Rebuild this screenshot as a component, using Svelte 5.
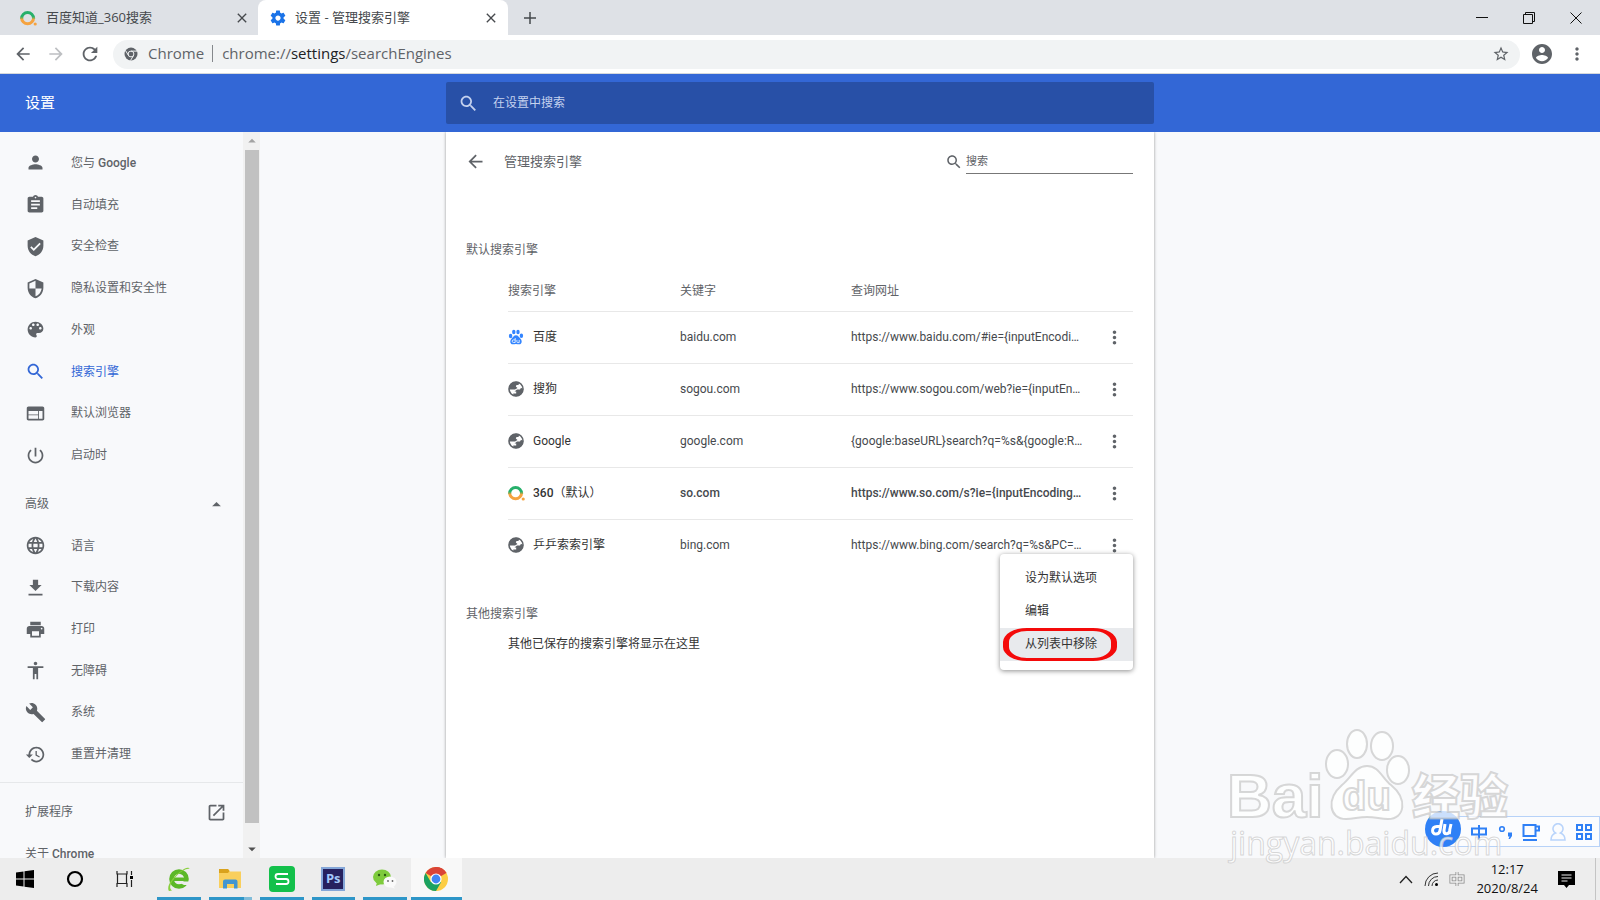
<script lang="ts">
  type NavItem = { icon: string; label: string; latin?: string; active?: boolean }
  type Engine = { icon: 'baidu' | 'globe' | 'so'; name: string; suffix?: string; keyword: string; url: string; isDefault?: boolean }

  const paths: Record<string, string> = {
    person: 'M12 12c2.21 0 4-1.79 4-4s-1.79-4-4-4-4 1.79-4 4 1.79 4 4 4zm0 2c-2.67 0-8 1.34-8 4v2h16v-2c0-2.66-5.33-4-8-4z',
    assignment: 'M19 3h-4.18C14.4 1.84 13.3 1 12 1c-1.3 0-2.4.84-2.82 2H5c-1.1 0-2 .9-2 2v14c0 1.1.9 2 2 2h14c1.1 0 2-.9 2-2V5c0-1.1-.9-2-2-2zm-7 0c.55 0 1 .45 1 1s-.45 1-1 1-1-.45-1-1 .45-1 1-1zm2 14H7v-2h7v2zm3-4H7v-2h10v2zm0-4H7V7h10v2z',
    verified: 'M12 1L3 5v6c0 5.55 3.84 10.74 9 12 5.16-1.26 9-6.45 9-12V5l-9-4zm-2 16l-4-4 1.41-1.41L10 14.17l6.59-6.59L18 9l-8 8z',
    security: 'M12 1L3 5v6c0 5.55 3.84 10.74 9 12 5.16-1.26 9-6.45 9-12V5l-9-4zm0 10.99h7c-.53 4.12-3.28 7.79-7 8.94V12H5V6.3l7-3.11v8.8z',
    palette: 'M12 3c-4.97 0-9 4.03-9 9s4.03 9 9 9c.83 0 1.5-.67 1.5-1.5 0-.39-.15-.74-.39-1.01-.23-.26-.38-.61-.38-.99 0-.83.67-1.5 1.5-1.5H16c2.76 0 5-2.24 5-5 0-4.42-4.03-8-9-8zm-5.5 9c-.83 0-1.5-.67-1.5-1.5S5.67 9 6.5 9 8 9.67 8 10.5 7.33 12 6.5 12zm3-4C8.67 8 8 7.33 8 6.5S8.67 5 9.5 5s1.5.67 1.5 1.5S10.33 8 9.5 8zm5 0c-.83 0-1.5-.67-1.5-1.5S13.67 5 14.5 5s1.5.67 1.5 1.5S15.33 8 14.5 8zm3 4c-.83 0-1.5-.67-1.5-1.5S16.67 9 17.5 9s1.5.67 1.5 1.5-.67 1.5-1.5 1.5z',
    search: 'M15.5 14h-.79l-.28-.27C15.41 12.59 16 11.11 16 9.5 16 5.91 13.09 3 9.5 3S3 5.91 3 9.5 5.91 16 9.5 16c1.61 0 3.09-.59 4.23-1.57l.27.28v.79l5 4.99L20.49 19l-4.99-5zm-6 0C7.01 14 5 11.99 5 9.5S7.01 5 9.5 5 14 7.01 14 9.5 11.99 14 9.5 14z',
    web: 'M20 4H4c-1.1 0-1.99.9-1.99 2L2 18c0 1.1.9 2 2 2h16c1.1 0 2-.9 2-2V6c0-1.1-.9-2-2-2zm-5 14H4v-4h11v4zm0-5H4V9h11v4zm5 5h-4V9h4v9z',
    power: 'M13 3h-2v10h2V3zm4.83 2.17l-1.42 1.42C17.99 7.86 19 9.81 19 12c0 3.87-3.13 7-7 7s-7-3.13-7-7c0-2.19 1.01-4.14 2.58-5.42L6.17 5.17C4.23 6.82 3 9.26 3 12c0 4.97 4.03 9 9 9s9-4.03 9-9c0-2.74-1.23-5.18-3.17-6.83z',
    language: 'M11.99 2C6.47 2 2 6.48 2 12s4.47 10 9.99 10C17.52 22 22 17.52 22 12S17.52 2 11.99 2zm6.93 6h-2.95c-.32-1.25-.78-2.45-1.38-3.56 1.84.63 3.37 1.91 4.33 3.56zM12 4.04c.83 1.2 1.48 2.53 1.91 3.96h-3.82c.43-1.43 1.08-2.76 1.91-3.96zM4.26 14C4.1 13.36 4 12.69 4 12s.1-1.36.26-2h3.38c-.08.66-.14 1.32-.14 2 0 .68.06 1.34.14 2H4.26zm.82 2h2.95c.32 1.25.78 2.45 1.38 3.56-1.84-.63-3.37-1.9-4.33-3.56zm2.95-8H5.08c.96-1.66 2.49-2.93 4.33-3.56C8.81 5.55 8.35 6.75 8.03 8zM12 19.96c-.83-1.2-1.48-2.53-1.91-3.96h3.82c-.43 1.43-1.08 2.76-1.91 3.96zM14.34 14H9.66c-.09-.66-.16-1.32-.16-2 0-.68.07-1.35.16-2h4.68c.09.65.16 1.32.16 2 0 .68-.07 1.34-.16 2zm.25 5.56c.6-1.11 1.06-2.31 1.38-3.56h2.95c-.96 1.65-2.49 2.93-4.33 3.56zM16.36 14c.08-.66.14-1.32.14-2 0-.68-.06-1.34-.14-2h3.38c.16.64.26 1.31.26 2s-.1 1.36-.26 2h-3.38z',
    download: 'M19 9h-4V3H9v6H5l7 7 7-7zM4 19v2h16v-2H4z',
    print: 'M19 8H5c-1.66 0-3 1.34-3 3v6h4v4h12v-4h4v-6c0-1.66-1.34-3-3-3zm-3 11H8v-5h8v5zm3-7c-.55 0-1-.45-1-1s.45-1 1-1 1 .45 1 1-.45 1-1 1zm-1-9H6v4h12V3z',
    accessibility: 'M12 2c1.1 0 2 .9 2 2s-.9 2-2 2-2-.9-2-2 .9-2 2-2zm9 7h-6v13h-2v-6h-2v6H9V9H3V7h18v2z',
    build: 'M22.7 19l-9.1-9.1c.9-2.3.4-5-1.5-6.9-2-2-5-2.4-7.4-1.3L9 6 6 9 1.6 4.7C.4 7.1.9 10.1 2.9 12.1c1.9 1.9 4.6 2.4 6.9 1.5l9.1 9.1c.4.4 1 .4 1.4 0l2.3-2.3c.5-.4.5-1.1.1-1.4z',
    restore: 'M13 3c-4.97 0-9 4.03-9 9H1l3.89 3.89.07.14L9 12H6c0-3.87 3.13-7 7-7s7 3.13 7 7-3.13 7-7 7c-1.93 0-3.68-.79-4.94-2.06l-1.42 1.42C8.27 19.99 10.51 21 13 21c4.97 0 9-4.03 9-9s-4.03-9-9-9zm-1 5v5l4.28 2.54.72-1.21-3.5-2.08V8H12z',
    open: 'M19 19H5V5h7V3H5c-1.11 0-2 .9-2 2v14c0 1.1.89 2 2 2h14c1.1 0 2-.9 2-2v-7h-2v7zM14 3v2h3.59l-9.83 9.83 1.41 1.41L19 6.41V10h2V3h-7z',
    back: 'M20 11H7.83l5.59-5.59L12 4l-8 8 8 8 1.41-1.41L7.83 13H20v-2z',
    forward: 'M12 4l-1.41 1.41L16.17 11H4v2h12.17l-5.58 5.59L12 20l8-8z',
    reload: 'M17.65 6.35C16.2 4.9 14.21 4 12 4c-4.42 0-7.99 3.58-7.99 8s3.57 8 7.99 8c3.73 0 6.84-2.55 7.73-6h-2.08c-.82 2.33-3.04 4-5.65 4-3.31 0-6-2.69-6-6s2.69-6 6-6c1.66 0 3.14.69 4.22 1.78L13 11h7V4l-2.35 2.35z',
    account: 'M12 2C6.48 2 2 6.48 2 12s4.48 10 10 10 10-4.48 10-10S17.52 2 12 2zm0 3c1.66 0 3 1.34 3 3s-1.34 3-3 3-3-1.34-3-3 1.34-3 3-3zm0 14.2c-2.5 0-4.71-1.28-6-3.22.03-1.99 4-3.08 6-3.08 1.99 0 5.97 1.09 6 3.08-1.29 1.94-3.5 3.22-6 3.22z',
    star: 'M22 9.24l-7.19-.62L12 2 9.19 8.63 2 9.24l5.46 4.73L5.82 21 12 17.27 18.18 21l-1.63-7.03L22 9.24zM12 15.4l-3.76 2.27 1-4.28-3.32-2.88 4.38-.38L12 6.1l1.71 4.04 4.38.38-3.32 2.88 1 4.28L12 15.4z',
    more: 'M12 8c1.1 0 2-.9 2-2s-.9-2-2-2-2 .9-2 2 .9 2 2 2zm0 2c-1.1 0-2 .9-2 2s.9 2 2 2 2-.9 2-2-.9-2-2-2zm0 6c-1.1 0-2 .9-2 2s.9 2 2 2 2-.9 2-2-.9-2-2-2z',
    gear: 'M19.43 12.98c.04-.32.07-.64.07-.98s-.03-.66-.07-.98l2.11-1.65c.19-.15.24-.42.12-.64l-2-3.46c-.12-.22-.39-.3-.61-.22l-2.49 1c-.52-.4-1.08-.73-1.69-.98l-.38-2.65C14.46 2.18 14.25 2 14 2h-4c-.25 0-.46.18-.49.42l-.38 2.65c-.61.25-1.17.59-1.69.98l-2.49-1c-.23-.09-.49 0-.61.22l-2 3.46c-.13.22-.07.49.12.64l2.11 1.65c-.04.32-.07.65-.07.98s.03.66.07.98l-2.11 1.65c-.19.15-.24.42-.12.64l2 3.46c.12.22.39.3.61.22l2.49-1c.52.4 1.08.73 1.69.98l.38 2.65c.03.24.24.42.49.42h4c.25 0 .46-.18.49-.42l.38-2.65c.61-.25 1.17-.59 1.69-.98l2.49 1c.23.09.49 0 .61-.22l2-3.46c.12-.22.07-.49-.12-.64l-2.11-1.65zM12 15.5c-1.93 0-3.5-1.57-3.5-3.5s1.57-3.5 3.5-3.5 3.5 1.57 3.5 3.5-1.57 3.5-3.5 3.5z',
    close: 'M19 6.41L17.59 5 12 10.59 6.41 5 5 6.41 10.59 12 5 17.59 6.41 19 12 13.41 17.59 19 19 17.59 13.41 12z',
    add: 'M20 13h-7v7h-2v-7H4v-2h7V4h2v7h7z',
    up: 'M7 14l5-5 5 5z',
    down: 'M7 10l5 5 5-5z',
  }

  const basic: NavItem[] = [
    { icon: 'person', label: '您与', latin: 'Google' },
    { icon: 'assignment', label: '自动填充' },
    { icon: 'verified', label: '安全检查' },
    { icon: 'security', label: '隐私设置和安全性' },
    { icon: 'palette', label: '外观' },
    { icon: 'search', label: '搜索引擎', active: true },
    { icon: 'web', label: '默认浏览器' },
    { icon: 'power', label: '启动时' },
  ]

  const advanced: NavItem[] = [
    { icon: 'language', label: '语言' },
    { icon: 'download', label: '下载内容' },
    { icon: 'print', label: '打印' },
    { icon: 'accessibility', label: '无障碍' },
    { icon: 'build', label: '系统' },
    { icon: 'restore', label: '重置并清理' },
  ]

  const engines: Engine[] = [
    { icon: 'baidu', name: '百度', keyword: 'baidu.com', url: 'https://www.baidu.com/#ie={inputEncodi…' },
    { icon: 'globe', name: '搜狗', keyword: 'sogou.com', url: 'https://www.sogou.com/web?ie={inputEn…' },
    { icon: 'globe', name: 'Google', keyword: 'google.com', url: '{google:baseURL}search?q=%s&{google:R…' },
    { icon: 'so', name: '360', suffix: '（默认）', keyword: 'so.com', url: 'https://www.so.com/s?ie={inputEncoding…', isDefault: true },
    { icon: 'globe', name: '乒乒索索引擎', keyword: 'bing.com', url: 'https://www.bing.com/search?q=%s&PC=…' },
  ]

  let openMenu = $state(4)
  let showAdvanced = $state(true)
</script>

{#snippet icon(name: string, size: number)}
  <svg width={size} height={size} viewBox="0 0 24 24" fill="currentColor" aria-hidden="true"><path d={paths[name]} /></svg>
{/snippet}

{#snippet soLogo()}
  <svg width="17" height="18" viewBox="0 0 17 18" fill="none" stroke-width="3" aria-hidden="true">
    <path d="M1.6 9.5a6 6 0 0 1 12 0" stroke="#27b06b" />
    <path d="M1.6 8.8a6 6 0 0 0 12 0" stroke="#f5a340" />
    <path d="M1.6 8.8v.9M13.6 8.8v.9" stroke="#8dae55" />
    <circle cx="15.2" cy="15" r="1.6" fill="#f5a340" />
  </svg>
{/snippet}

{#snippet globe()}
  <svg width="16" height="16" viewBox="0 0 16 16" aria-hidden="true">
    <circle cx="8" cy="8" r="7" fill="#fff" stroke="#5f6368" stroke-width="1.6" />
    <path d="M1 8c0-4 3-7.2 7-7.2 1.5 0 2.6.3 3.2.8L10.5 4H8.5L7.8 5.6 9.5 7 7 8.6H1z" fill="#5f6368" />
    <path d="M15.2 8c0 3.8-3 7.2-7.2 7.2-1 0-2-.2-2.6-.5L5.200 12.500H8.200V10.500H6.500L9 8.600H12L13 6.800z" fill="#5f6368" />
  </svg>
{/snippet}

{#snippet baiduLogo()}
  <svg width="16" height="16" viewBox="0 0 16 16" fill="#3385ff" aria-hidden="true">
    <ellipse cx="2.6" cy="7" rx="1.7" ry="2.2" />
    <ellipse cx="5.8" cy="3" rx="1.7" ry="2.2" />
    <ellipse cx="10" cy="3" rx="1.7" ry="2.2" />
    <ellipse cx="13.4" cy="6.8" rx="1.7" ry="2.2" />
    <path d="M8 6.3c2.200 0 3 2 4.500 3.400 2 2 1.500 5.600-1.300 5.600-1.200 0-2-.4-3.200-.4s-2 .4-3.200.4c-2.800 0-3.300-3.600-1.300-5.600C5 8.300 5.800 6.300 8 6.300z" />
    <path d="M7.2 9v4.500H5.500a1.300 1.300 0 0 1 0-2.600h1.700M8.900 10.900v2a.8.8 0 0 0 .8.700h1.500v-2.700" fill="none" stroke="#fff" stroke-width=".8" />
  </svg>
{/snippet}

{#snippet navLink(item: NavItem)}
  <a class="nav-item" class:active={item.active} href="#{item.icon}">
    {@render icon(item.icon, 21)}
    <span>{item.label}{#if item.latin}{' '}<b>{item.latin}</b>{/if}</span>
  </a>
{/snippet}

<div class="screen">
  <header class="tabs">
    <div class="tab">
      {@render soLogo()}
      <span class="tab-title">百度知道_360搜索</span>
      <button aria-label="关闭标签页">{@render icon('close', 16)}</button>
    </div>
    <div class="tab current">
      <span class="gear">{@render icon('gear', 18)}</span>
      <span class="tab-title">设置 - 管理搜索引擎</span>
      <button aria-label="关闭标签页">{@render icon('close', 16)}</button>
    </div>
    <button class="new-tab" aria-label="新标签页">{@render icon('add', 18)}</button>
    <div class="window-buttons">
      <button aria-label="最小化"><svg width="12" height="12" viewBox="0 0 12 12"><path d="M0 5.5h12" stroke="#111" /></svg></button>
      <button aria-label="还原"><svg width="12" height="12" viewBox="0 0 12 12" fill="none" stroke="#111"><path d="M.5 2.500h9v9h-9zM2.500 2.500v-2h9v9h-2" /></svg></button>
      <button aria-label="关闭"><svg width="12" height="12" viewBox="0 0 12 12"><path d="M.5.500l11 11M11.500.500l-11 11" stroke="#111" /></svg></button>
    </div>
  </header>

  <div class="toolbar">
    <button aria-label="后退">{@render icon('back', 20)}</button>
    <button class="off" aria-label="前进" disabled>{@render icon('forward', 20)}</button>
    <button aria-label="重新加载">{@render icon('reload', 22)}</button>
    <div class="omnibox">
      <svg width="14" height="14" viewBox="0 0 14 14" aria-hidden="true">
        <circle cx="7" cy="7" r="6.5" fill="#5f6368" />
        <circle cx="7" cy="7" r="2.9" fill="none" stroke="#f1f3f4" stroke-width="1" />
        <path d="M7 4.100h6M4.500 8.500l-3-5M9.500 8.500l-3 5" stroke="#f1f3f4" stroke-width="1" />
      </svg>
      <span class="origin">Chrome</span>
      <span class="address">chrome://<em>settings</em>/searchEngines</span>
      <button aria-label="收藏">{@render icon('star', 18)}</button>
    </div>
    <button aria-label="用户">{@render icon('account', 24)}</button>
    <button aria-label="菜单">{@render icon('more', 20)}</button>
  </div>

  <div class="settings-bar">
    <h1>设置</h1>
    <label class="settings-search">
      {@render icon('search', 21)}
      <input type="text" placeholder="在设置中搜索" />
    </label>
  </div>

  <div class="body">
    <div class="side">
      <nav>
        <div class="group basic">
          {#each basic as item}{@render navLink(item)}{/each}
        </div>
        <button class="wide" onclick={() => (showAdvanced = !showAdvanced)}>
          <span>高级</span>{@render icon(showAdvanced ? 'up' : 'down', 21)}
        </button>
        {#if showAdvanced}
          <div class="group advanced">
            {#each advanced as item}{@render navLink(item)}{/each}
          </div>
        {/if}
        <hr />
        <a class="wide" href="#extensions"><span>扩展程序</span>{@render icon('open', 21)}</a>
        <a class="wide" href="#about"><span>关于 <b>Chrome</b></span></a>
      </nav>
      <div class="scrollbar">
        <span class="up">{@render icon('up', 18)}</span>
        <div class="thumb"></div>
        <span>{@render icon('down', 18)}</span>
      </div>
    </div>

    <main>
      <div class="page-head">
        <button aria-label="返回">{@render icon('back', 21)}</button>
        <h2>管理搜索引擎</h2>
        <label class="page-search">
          {@render icon('search', 18)}
          <input type="text" placeholder="搜索" />
        </label>
      </div>

      <h3>默认搜索引擎</h3>
      <table>
        <thead>
          <tr><th class="name">搜索引擎</th><th class="keyword">关键字</th><th>查询网址</th><th class="actions"></th></tr>
        </thead>
        <tbody>
          {#each engines as e, i}
            <tr class:default={e.isDefault}>
              <td class="name">
                <div class="engine">
                  {#if e.icon === 'baidu'}{@render baiduLogo()}{:else if e.icon === 'so'}{@render soLogo()}{:else}{@render globe()}{/if}
                  <span>{e.name}{#if e.suffix}<small>{e.suffix}</small>{/if}</span>
                </div>
              </td>
              <td>{e.keyword}</td>
              <td>{e.url}</td>
              <td class="actions">
                <button aria-label="更多操作" onclick={() => (openMenu = openMenu === i ? -1 : i)}>{@render icon('more', 21)}</button>
                {#if openMenu === i}
                  <div class="menu">
                    <button>设为默认选项</button>
                    <button>编辑</button>
                    <button class="hover">从列表中移除<span class="mark"></span></button>
                  </div>
                {/if}
              </td>
            </tr>
          {/each}
        </tbody>
      </table>

      <h3 class="other">其他搜索引擎</h3>
      <p>其他已保存的搜索引擎将显示在这里</p>
    </main>
  </div>

  <footer>
    <div class="system">
      <button aria-label="开始">
        <svg width="18" height="18" viewBox="0 0 18 18"><path d="M0 2.500L7.500 1.500V8.500H0zM8.500 1.300L18 0V8.500H8.500zM0 9.500H7.500V16.500L0 15.500zM8.500 9.500H18V18L8.500 16.700z" fill="#000" /></svg>
      </button>
      <button aria-label="搜索">
        <svg width="18" height="18" viewBox="0 0 18 18"><circle cx="9" cy="9" r="7" fill="none" stroke="#000" stroke-width="2.2" /></svg>
      </button>
      <button aria-label="任务视图">
        <svg width="18" height="18" viewBox="0 0 18 18" fill="none" stroke="#222" stroke-width="1.2"><path d="M1 1v3h10V1M1.500 4v9M10.500 4v9M1 17v-3.500h10V17M15.500 1v4M15.500 10v7" /><path d="M14 6h3v3h-3z" fill="#000" stroke="none" /></svg>
      </button>
    </div>
    <div class="apps">
      <button class="app" aria-label="360浏览器">
        <svg width="24" height="26" viewBox="0 0 24 26">
          <circle cx="12" cy="13" r="7.5" fill="none" stroke="#5cb829" stroke-width="4.6" />
          <path d="M10 15.500h14v3.500h-7z" fill="#ededed" />
          <path d="M7 11.500h14v3.500H7z" fill="#5cb829" />
          <path d="M2 25c-3-4 3-13 10-18.500C17 2.400 22 0 22.500 3 20 2 14 5 9 10.500 4 16 1 22 5 24.500z" fill="#88cf3c" />
        </svg>
      </button>
      <button class="app grouped" aria-label="文件资源管理器">
        <svg width="24" height="20" viewBox="0 0 24 20">
          <path d="M1 0h9l2 2.500h11V19H1z" fill="#f9cf5d" />
          <path d="M1 0h9l1.500 2-1.500 2H1z" fill="#d9a21d" />
          <path d="M5 19.500v-7a2 2 0 0 1 2-2h10.500a2 2 0 0 1 2 2v7H16V15H9v4.500z" fill="#4296d2" />
        </svg>
      </button>
      <button class="app" aria-label="WPS">
        <svg width="26" height="26" viewBox="0 0 26 26">
          <rect width="26" height="26" rx="4" fill="#13c04b" />
          <path d="M19 8H9a2.500 2.500 0 0 0 0 5h8a2.500 2.500 0 0 1 0 5H7" fill="none" stroke="#fff" stroke-width="1.8" />
        </svg>
      </button>
      <button class="app" aria-label="Photoshop"><span class="ps">Ps</span></button>
      <button class="app" aria-label="微信">
        <svg width="24" height="20" viewBox="0 0 24 20">
          <ellipse cx="9" cy="8" rx="9" ry="7.6" fill="#7ecb3c" />
          <path d="M4 13l-1 4 5-2z" fill="#7ecb3c" />
          <circle cx="6" cy="6" r="1.2" fill="#2c5a12" /><circle cx="12" cy="6" r="1.2" fill="#2c5a12" />
          <ellipse cx="17" cy="13" rx="6.5" ry="5.6" fill="#fafafa" />
          <path d="M20 17l2 2.500-4-1z" fill="#fafafa" />
          <circle cx="15" cy="12" r=".9" fill="#666" /><circle cx="19.5" cy="12" r=".9" fill="#666" />
        </svg>
      </button>
      <button class="app front" aria-label="Chrome">
        <svg width="24" height="24" viewBox="0 0 24 24">
          <circle cx="12" cy="12" r="12" fill="#fccd44" />
          <path d="M12 12L1.600 6A12 12 0 0 1 22.400 6z" fill="#da4437" />
          <path d="M12 6h10.400A12 12 0 0 0 12 0z" fill="#da4437" />
          <path d="M1.600 6A12 12 0 0 0 12 24l5.200-9H6.800z" fill="#1ba261" />
          <circle cx="12" cy="12" r="5.6" fill="#fff" />
          <circle cx="12" cy="12" r="4.4" fill="#4285f4" />
        </svg>
      </button>
    </div>
    <div class="tray">
      <svg width="14" height="9" viewBox="0 0 14 9" fill="none" stroke="#222" stroke-width="1.3"><path d="M1 8l6-6.500L13 8" /></svg>
      <svg width="14" height="14" viewBox="0 0 14 14" fill="none" stroke="#333"><path d="M1 14A13 13 0 0 1 14 1M4.500 14A9.500 9.500 0 0 1 14 4.500M8 14a6 6 0 0 1 6-6" /><circle cx="12.5" cy="12.5" r="1.5" fill="#000" stroke="none" /></svg>
      <svg width="16" height="16" viewBox="0 0 16 16" fill="none"><path d="M2 5h12v6H2zM8 1v14" stroke="#888" stroke-width="3" /><path d="M2 5h12v6H2zM8 1v14" stroke="#f4f4f4" stroke-width="1.4" /></svg>
      <time><span>12:17</span><span>2020/8/24</span></time>
      <button aria-label="通知">
        <svg width="17" height="17" viewBox="0 0 17 17"><path d="M0 0h17v14h-6l-2.500 3L6 14H0z" fill="#000" /><path d="M3.500 4h10M3.500 7h10M3.500 10h6" stroke="#ededed" /></svg>
      </button>
      <span class="peek"></span>
    </div>
  </footer>

  <div class="ime">
    <svg width="36" height="36" viewBox="0 0 36 36"><circle cx="18" cy="18" r="18" fill="#2f80f6" /><g fill="none" stroke="#fff" stroke-width="3"><path d="M17 8l-2 11.500c-.3 2-2 3.500-4 3.500-4.500 0-5-7 1-7.500h3.500M20 13l-1 6.500c-.3 4 4.500 4.500 5.500.5l1.500-7M24.800 19l-.5 4" /></g></svg>
    <svg width="16" height="16" viewBox="0 0 16 16" fill="none" stroke="#2f80f6" stroke-width="2"><path d="M1 4.500h14v6H1zM8 1v15" /></svg>
    <svg width="16" height="16" viewBox="0 0 16 16"><circle cx="5" cy="5" r="2.3" fill="none" stroke="#2f80f6" stroke-width="1.6" /><path d="M11 8.500h4v3.500l-2 3h-1.500l1-2.500H11z" fill="#2f80f6" /></svg>
    <svg width="18" height="18" viewBox="0 0 18 18" fill="none" stroke="#2f80f6" stroke-width="2"><path d="M1.500 2h12v11h-12zM13.500 3.500H17v4h-3.500M1 17h14" /></svg>
    <svg width="16" height="18" viewBox="0 0 16 18" fill="none" stroke="#b9d4fb" stroke-width="1.6"><path d="M5.500 10a5 5 0 1 1 5 0C13 11 15 13 15 17H1c0-4 2-6 4.500-7z" /></svg>
    <svg width="16" height="16" viewBox="0 0 16 16" fill="none" stroke="#2f80f6" stroke-width="2"><path d="M1 1h5v5H1zM10 1h5v5h-5zM1 10h5v5H1zM10 10h5v5h-5z" /></svg>
  </div>

  <svg class="watermark" width="300" height="150" viewBox="0 0 300 150">
    <ellipse cx="111" cy="47" rx="11" ry="14" />
    <ellipse cx="131" cy="27" rx="10" ry="14" />
    <ellipse cx="156" cy="29" rx="11" ry="14" />
    <ellipse cx="172" cy="53" rx="11" ry="14" />
    <path d="M141 49c12 0 15 12 24 19 17 14 14 34-3 34-8 0-12-2-21-2s-13 2-21 2c-17 0-20-20-4-34 9-7 13-19 25-19z" />
    <text class="latin" x="1" y="100" font-size="62">Bai</text>
    <text class="latin" x="116" y="93" font-size="40">du</text>
    <text class="cjk" x="186" y="97" font-size="48">经验</text>
    <text class="link" x="4" y="138" font-size="32">jingyan.baidu.com</text>
  </svg>
</div>

<style>
  :global(body) {
    overflow: hidden;
  }
  .screen {
    --grey: #5f6368;
    position: relative;
    display: flex;
    flex-direction: column;
    height: 100vh;
    font: 12px/18px Roboto, "Noto Sans CJK SC", sans-serif;
    color: #46494d;
    background: #f8f9fb;
  }
  .screen * {
    box-sizing: border-box;
  }
  svg {
    display: block;
    flex: none;
  }
  button {
    display: flex;
    align-items: center;
    justify-content: center;
    padding: 0;
    border: 0;
    background: none;
    color: inherit;
    font: inherit;
  }
  a {
    color: inherit;
    text-decoration: none;
  }
  b {
    font-weight: 500;
  }
  input {
    min-width: 0;
    flex: 1;
    padding: 0;
    border: 0;
    outline: 0;
    background: none;
    color: inherit;
    font: inherit;
  }
  input::placeholder {
    color: inherit;
    opacity: 1;
  }

  .tabs {
    display: flex;
    align-items: center;
    height: 35px;
    flex: none;
    background: #dee1e6;
    font: 13px/18px "Open Sans", "Noto Sans CJK SC", sans-serif;
  }
  .tab {
    display: flex;
    align-items: center;
    gap: 9px;
    width: 258px;
    height: 35px;
    padding: 0 8px 0 20px;
  }
  .tab.current {
    width: 250px;
    padding: 0 9px 0 11px;
    gap: 8px;
    border-radius: 8px 8px 0 0;
    background: #fff;
  }
  .tab-title {
    flex: 1;
    padding-bottom: 2px;
    white-space: nowrap;
  }
  .gear {
    color: #1a73e8;
  }
  .new-tab {
    width: 44px;
  }
  .window-buttons {
    display: flex;
    height: 30px;
    margin-left: auto;
    padding-right: 1px;
  }
  .window-buttons button {
    width: 47px;
  }

  .toolbar {
    display: flex;
    align-items: center;
    height: 39px;
    flex: none;
    padding: 0 13px;
    gap: 13px;
    background: #fff;
    border-bottom: 1px solid #d5d8dc;
    color: var(--grey);
  }
  .toolbar > .off {
    color: #bdbfc2;
  }
  .omnibox {
    display: flex;
    align-items: center;
    flex: 1;
    height: 29px;
    margin: 0 -3px 0 -1px;
    padding: 0 10px 0 11px;
    border-radius: 15px;
    background: #f1f3f4;
    font: 15px/20px "Open Sans", sans-serif;
  }
  .origin {
    margin: 0 0 2px 10px;
    padding-right: 8px;
    border-right: 1px solid #85888c;
    line-height: 17px;
  }
  .address {
    flex: 1;
    margin: 0 0 2px 9px;
  }
  .address em {
    font-style: normal;
    color: #202124;
  }

  .settings-bar {
    display: grid;
    grid-template-columns: 1fr minmax(0, 708px) 1fr;
    align-items: center;
    height: 58px;
    flex: none;
    background: #3367d6;
    color: #fff;
  }
  h1 {
    margin: 0;
    padding-left: 25px;
    font-size: 15px;
    font-weight: 400;
  }
  .settings-search {
    display: flex;
    align-items: center;
    gap: 14px;
    height: 42px;
    padding-left: 12px;
    border-radius: 2px;
    background: #2850a7;
    color: #c5d2ef;
  }

  .body {
    display: grid;
    grid-template-columns: 1fr minmax(0, 708px) 1fr;
    flex: 1;
    min-height: 0;
  }
  .side {
    display: flex;
    width: 260px;
    min-height: 0;
    color: var(--grey);
  }
  nav {
    flex: 1;
    overflow: hidden;
    padding-top: 10px;
  }
  .group {
    display: grid;
    grid-auto-rows: 1fr;
  }
  .basic {
    height: 334px;
    margin-bottom: 7px;
  }
  .advanced {
    height: 250px;
  }
  .nav-item {
    display: flex;
    align-items: center;
    gap: 25px;
    padding-left: 25px;
  }
  .nav-item.active {
    color: #3367d6;
  }
  .wide {
    display: flex;
    align-items: center;
    justify-content: space-between;
    width: 100%;
    height: 42px;
    padding: 0 16px 0 25px;
  }
  hr {
    margin: 7px 0 8px;
    border: 0;
    border-top: 1px solid #e6e8ea;
  }
  .scrollbar {
    display: flex;
    flex-direction: column;
    align-items: center;
    width: 17px;
    background: #f1f1f1;
    color: #505050;
  }
  .scrollbar .up {
    color: #a3a3a3;
  }
  .thumb {
    width: 14px;
    flex: 1;
    margin-bottom: 17px;
    background: #c1c1c1;
  }

  main {
    padding: 0 21px 0 20px;
    background: #fff;
    box-shadow: 0 0 3px rgba(0, 0, 0, 0.4);
    clip-path: inset(0 -4px);
  }
  .page-head {
    display: flex;
    align-items: center;
    height: 59px;
    color: var(--grey);
  }
  .page-head button {
    width: 18px;
  }
  h2 {
    flex: 1;
    margin: 0 0 0 20px;
    font-size: 13px;
    font-weight: 400;
  }
  .page-search {
    display: flex;
    align-items: center;
    gap: 3px;
    width: 188px;
    font-size: 11px;
  }
  .page-search input {
    height: 25px;
    border-bottom: 1px solid #777;
  }
  h3 {
    margin: 50px 0 11px;
    font-size: 12px;
    line-height: 18px;
    font-weight: 400;
    color: var(--grey);
  }
  table {
    width: calc(100% - 42px);
    margin-left: 42px;
    border-collapse: collapse;
    table-layout: fixed;
  }
  th {
    height: 41px;
    padding: 2px 0 0;
    text-align: left;
    font-weight: 400;
    color: var(--grey);
  }
  td {
    height: 52px;
    padding: 0;
    border-top: 1px solid #e8e8e8;
    white-space: nowrap;
  }
  .name {
    width: 172px;
  }
  .keyword {
    width: 171px;
  }
  .actions {
    position: relative;
    width: 40px;
  }
  .actions > button {
    width: 42px;
    height: 42px;
    color: var(--grey);
  }
  .engine {
    display: grid;
    grid-template-columns: 17px 1fr;
    align-items: center;
    justify-items: start;
    gap: 8px;
    color: #333;
  }
  .default td,
  .default .engine {
    font-weight: 500;
  }
  small {
    font-size: 12px;
    font-weight: 400;
  }
  .menu {
    position: absolute;
    z-index: 1;
    top: 34px;
    right: 0;
    width: 133px;
    padding: 8px 0 9px;
    border-radius: 4px;
    background: #fff;
    box-shadow: 0 1px 5px rgba(0, 0, 0, 0.45);
    color: #333;
  }
  .menu button {
    position: relative;
    justify-content: flex-start;
    width: 100%;
    height: 33px;
    padding-left: 25px;
  }
  .menu .hover {
    background: #e8eaed;
  }
  .mark {
    position: absolute;
    inset: 0 16px 0 3px;
    border: solid #f40a0a;
    border-width: 3px 6px;
    border-radius: 24px / 14px;
  }
  .other {
    margin: 34px 0 12px;
  }
  p {
    margin: 0 0 0 42px;
    color: #333;
  }

  footer {
    display: flex;
    height: 42px;
    flex: none;
    background: #ededed;
  }
  .system {
    display: flex;
    margin-right: 3px;
  }
  .system button {
    width: 50px;
  }
  .apps {
    display: grid;
    grid-template-columns: repeat(6, 1fr);
    width: 309px;
  }
  .app {
    border-bottom: 3px solid #2e96c8;
    margin: 0 4px;
    padding-top: 2px;
  }
  .grouped {
    border-image: linear-gradient(90deg, #2e96c8 80%, #80bcd9 80%) 1;
  }
  .front {
    margin: 0;
    background: #f8f8f8;
  }
  .ps {
    width: 24px;
    height: 24px;
    border: 2px solid #84a6d8;
    background: #26215f;
    color: #a3c8fa;
    font: 700 13px/19px "Open Sans", sans-serif;
  }
  .tray {
    display: flex;
    align-items: center;
    margin-left: auto;
    gap: 11px;
  }
  time {
    display: flex;
    flex-direction: column;
    align-items: center;
    color: #111;
    font: 13px/19px "Open Sans", sans-serif;
  }
  .tray button {
    margin: 0 9px;
  }
  .peek {
    width: 5px;
    height: 42px;
    border-left: 1px solid #c4c4c4;
  }

  .ime {
    position: absolute;
    right: 0;
    bottom: 53px;
    display: flex;
    align-items: center;
    justify-content: space-between;
    width: 160px;
    height: 31px;
    padding-right: 7px;
    border: 1px solid #b7d2f8;
    background: #fbfcfe;
  }
  .ime svg:first-child {
    margin: -6px 0 0 -16px;
  }
  .watermark {
    position: absolute;
    right: 74px;
    bottom: 33px;
    overflow: visible;
    pointer-events: none;
    fill: rgba(255, 255, 255, 0.75);
    stroke: rgba(190, 190, 190, 0.6);
    stroke-width: 2px;
  }
  .latin {
    font-family: "Liberation Sans", sans-serif;
    font-weight: 700;
  }
  .cjk {
    font-family: "Noto Sans CJK SC", sans-serif;
    font-weight: 900;
  }
  .link {
    font-family: "Open Sans", sans-serif;
    stroke-width: 1px;
  }
</style>
